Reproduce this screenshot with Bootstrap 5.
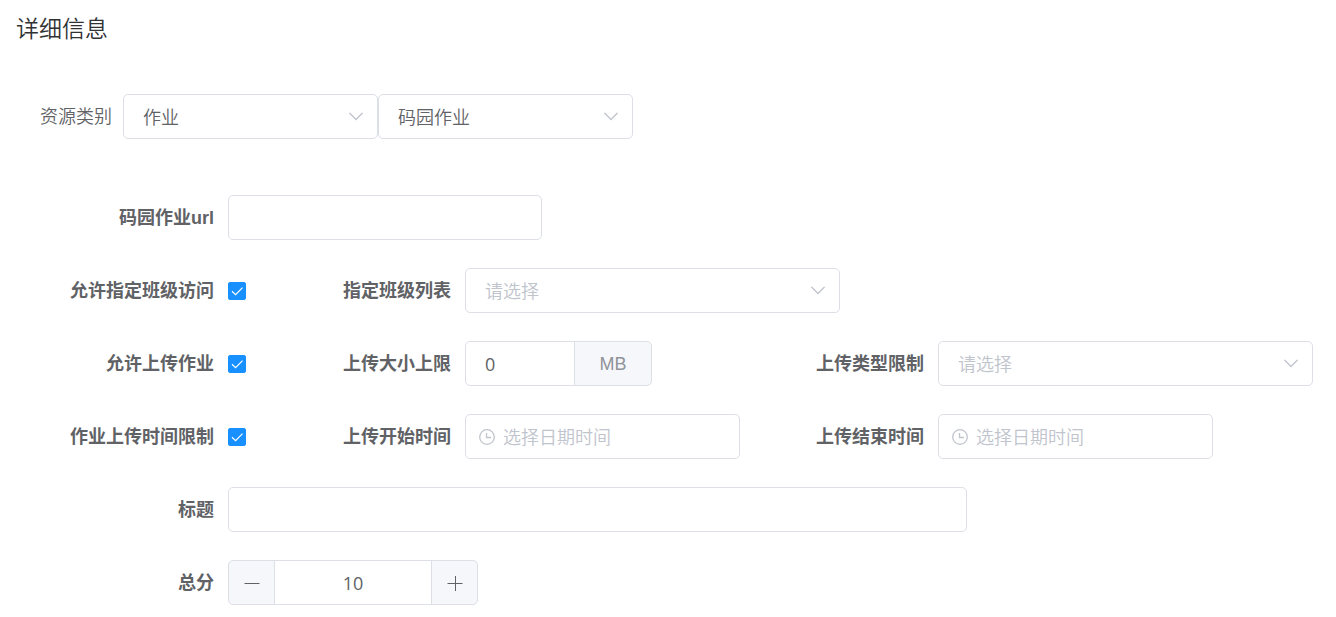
<!DOCTYPE html>
<html lang="zh-CN">
<head>
<meta charset="utf-8">
<meta name="viewport" content="width=device-width, initial-scale=1">
<title>详细信息</title>
<link rel="stylesheet" href="https://cdn.jsdelivr.net/npm/bootstrap@5.3.0/dist/css/bootstrap.min.css">
<style>
  :root { --line: #dcdfe6; --ink: #606266; --hint: #c0c4cc; --fill: #f5f7fa; }
  body { font-family: "Liberation Sans", "Noto Sans CJK SC", sans-serif; font-size: 18px; line-height: 24px; color: var(--ink); background: #fff; }
  h1 { font-size: 23px; line-height: 34px; font-weight: 350; color: #303133; }

  .form-control, .form-select, .input-group-text, .btn-step {
    height: 45px; border: 1px solid var(--line); border-radius: 5px;
    font-size: 18px; line-height: 24px; color: var(--ink); font-weight: 350;
  }
  .form-control { padding: 0 19px; }
  .form-select {
    padding: 3px 44px 0 19px;
    background: #fff url("data:image/svg+xml,%3Csvg xmlns='http://www.w3.org/2000/svg' width='14' height='9' viewBox='0 0 14 9'%3E%3Cpath d='M.8 1.2 7 7.5l6.200-6.300' fill='none' stroke='%23c0c4cc' stroke-width='1.300' stroke-linecap='round'/%3E%3C/svg%3E") no-repeat right 14px center / 14px 9px;
  }
  .form-control::placeholder, .form-select.is-blank { color: var(--hint); opacity: 1; }
  .digits { font-family: "Open Sans", sans-serif; font-weight: 400; }

  .form-check-input[type=checkbox] { width: 18px; height: 18px; border-radius: 2px; margin: 0; flex: none; }
  .form-check-input[type=checkbox]:checked {
    background-color: #1890ff; border-color: #1890ff; background-size: 18px 18px;
    background-image: url("data:image/svg+xml,%3Csvg xmlns='http://www.w3.org/2000/svg' viewBox='0 0 18 18'%3E%3Cpath d='M4 9.300 7.600 12.700 14.500 5.700' fill='none' stroke='%23fff' stroke-width='1.200'/%3E%3C/svg%3E");
  }

  .category { padding: 0 16px 0 40px; }
  .category label { width: 83px; font-weight: 350; padding-top: 1px; }
  .w-category { width: 255px; }
  .w-url { width: 314px; }
  .w-list { width: 375px; }
  .w-size { width: 187px; }
  .w-date { width: 275px; }
  .w-title { width: 739px; }
  .w-score { width: 250px; }

  .fields { padding-right: 23px; gap: 28px; }
  .line { display: grid; grid-template-columns: 277fr 473fr 563fr; align-items: center; min-height: 45px; }
  .field { display: flex; align-items: center; gap: 14px; min-width: 0; }
  .field > label { flex: none; width: 174px; text-align: right; font-weight: 700; }
  .field:first-child > label { width: 214px; }
  .span-2 { grid-column: span 2; }
  .span-3 { grid-column: span 3; }

  .size-unit { width: 78px; background: var(--fill); color: #909399; font-weight: 400; }
  .date-icon { left: 14px; pointer-events: none; color: var(--hint); }
  .date-input { padding: 3px 19px 0 37px; }
  .btn-step { width: 47px; padding: 0; background: var(--fill); }

  @media (max-width: 1100px) {
    .line { grid-template-columns: 1fr; gap: 28px; }
    .span-2, .span-3 { grid-column: auto; }
    .field > label, .field:first-child > label { width: 160px; }
    .field > :last-child:not(.form-check-input) { flex: 0 1 auto; min-width: 0; }
  }
</style>
</head>
<body>
<main>
  <h1 class="px-3 pt-2 mb-0 mt-1">详细信息</h1>

  <div class="category d-flex flex-wrap align-items-center mt-5">
    <label for="category">资源类别</label>
    <select id="category" class="form-select w-category"><option>作业</option></select>
    <select class="form-select w-category" aria-label="资源子类别"><option>码园作业</option></select>
  </div>

  <form class="fields d-flex flex-column mt-5 pt-2">
    <div class="line">
      <div class="field span-3">
        <label for="url">码园作业url</label>
        <input id="url" type="text" class="form-control w-url">
      </div>
    </div>

    <div class="line">
      <div class="field">
        <label for="allowClass">允许指定班级访问</label>
        <input id="allowClass" type="checkbox" class="form-check-input" checked>
      </div>
      <div class="field span-2">
        <label for="classList">指定班级列表</label>
        <select id="classList" class="form-select is-blank w-list"><option>请选择</option></select>
      </div>
    </div>

    <div class="line">
      <div class="field">
        <label for="allowUpload">允许上传作业</label>
        <input id="allowUpload" type="checkbox" class="form-check-input" checked>
      </div>
      <div class="field">
        <label for="size">上传大小上限</label>
        <div class="input-group flex-nowrap w-size">
          <input id="size" type="text" class="form-control digits" value="0">
          <span class="input-group-text size-unit justify-content-center">MB</span>
        </div>
      </div>
      <div class="field">
        <label for="types">上传类型限制</label>
        <select id="types" class="form-select is-blank w-list"><option>请选择</option></select>
      </div>
    </div>

    <div class="line">
      <div class="field">
        <label for="limitTime">作业上传时间限制</label>
        <input id="limitTime" type="checkbox" class="form-check-input" checked>
      </div>
      <div class="field">
        <label for="start">上传开始时间</label>
        <div class="position-relative d-flex align-items-center w-date">
          <svg class="date-icon position-absolute" width="16" height="16" viewBox="0 0 16 16" fill="none" stroke="currentColor" stroke-width="1.300" aria-hidden="true"><circle cx="8" cy="8" r="7.300"/><path d="M7.500 4v4.500H12"/></svg>
          <input id="start" type="text" class="form-control date-input" placeholder="选择日期时间">
        </div>
      </div>
      <div class="field">
        <label for="end">上传结束时间</label>
        <div class="position-relative d-flex align-items-center w-date">
          <svg class="date-icon position-absolute" width="16" height="16" viewBox="0 0 16 16" fill="none" stroke="currentColor" stroke-width="1.300" aria-hidden="true"><circle cx="8" cy="8" r="7.300"/><path d="M7.500 4v4.500H12"/></svg>
          <input id="end" type="text" class="form-control date-input" placeholder="选择日期时间">
        </div>
      </div>
    </div>

    <div class="line">
      <div class="field span-3">
        <label for="title">标题</label>
        <input id="title" type="text" class="form-control w-title">
      </div>
    </div>

    <div class="line">
      <div class="field span-3">
        <label for="score">总分</label>
        <div class="input-group flex-nowrap w-score">
          <button type="button" class="btn btn-step" aria-label="减少"><svg class="d-block mx-auto" width="16" height="16" viewBox="0 0 16 16" stroke="currentColor" aria-hidden="true"><path d="M.5 8.500h15"/></svg></button>
          <input id="score" type="text" class="form-control digits text-center" value="10">
          <button type="button" class="btn btn-step" aria-label="增加"><svg class="d-block mx-auto" width="16" height="16" viewBox="0 0 16 16" stroke="currentColor" aria-hidden="true"><path d="M.5 8.500h15M8.500 1v15"/></svg></button>
        </div>
      </div>
    </div>
  </form>
</main>
<script src="https://cdn.jsdelivr.net/npm/bootstrap@5.3.0/dist/js/bootstrap.bundle.min.js"></script>
</body>
</html>
